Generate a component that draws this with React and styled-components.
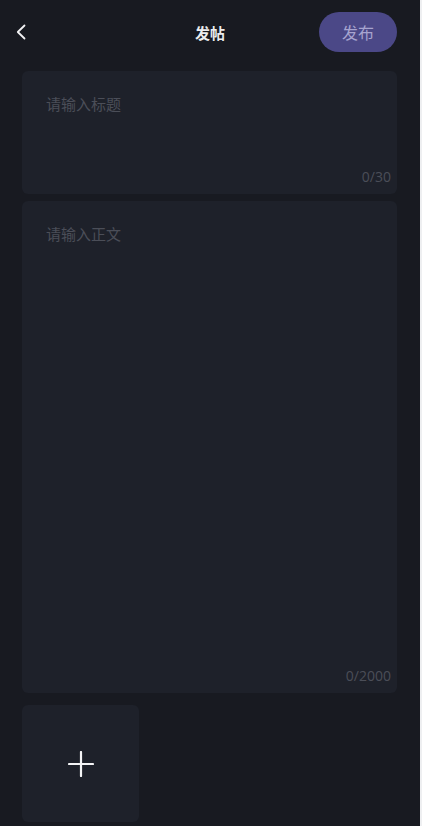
import React, { useState } from "react";
import styled, { createGlobalStyle } from "styled-components";

const GlobalStyle = createGlobalStyle`
  html, body {
    margin: 0;
    padding: 0;
    background: #eeeff1;
  }
  * {
    box-sizing: border-box;
  }
`;

const Page = styled.div`
  width: 420px;
  height: 826px;
  background: #181a21;
  font-family: "Noto Sans CJK SC", "Noto Sans", sans-serif;
  display: flex;
  flex-direction: column;
  overflow: hidden;
`;

const Header = styled.header`
  height: 65px;
  display: grid;
  grid-template-columns: 1fr auto 1fr;
  align-items: center;
  padding: 0 23px 1px 23px;
`;

const BackButton = styled.button`
  justify-self: start;
  margin-left: -7px;
  background: none;
  border: none;
  padding: 0;
  width: 20px;
  height: 24px;
  display: flex;
  align-items: center;
  cursor: pointer;
`;

const Title = styled.h1`
  margin: 0;
  color: #ececef;
  font-size: 15px;
  font-weight: 700;
`;

const PublishButton = styled.button`
  justify-self: end;
  width: 78px;
  height: 40px;
  border: none;
  border-radius: 20px;
  background: #4b4887;
  color: #a7a4cf;
  font-family: inherit;
  font-size: 16px;
  cursor: pointer;
`;

const Content = styled.main`
  flex: 1;
  display: flex;
  flex-direction: column;
  gap: 7px;
  padding: 6px 23px 0 22px;
`;

const Card = styled.div`
  position: relative;
  height: ${(p) => p.$height}px;
  background: #1e212a;
  border-radius: 6px;
  padding: 22px 24px;
`;

const Field = styled.textarea`
  width: 100%;
  height: 100%;
  background: transparent;
  border: none;
  outline: none;
  resize: none;
  padding: 0;
  color: #d8d9de;
  font-family: inherit;
  font-size: 15px;
  line-height: 22px;

  &::placeholder {
    color: #4b4e58;
  }
`;

const Counter = styled.span`
  position: absolute;
  right: 6px;
  bottom: 8px;
  color: #4b4e58;
  font-family: "Open Sans", "Noto Sans", sans-serif;
  font-size: 14px;
`;

const Media = styled.div`
  margin-top: 5px;
  display: flex;
`;

const AddTile = styled.button`
  width: 117px;
  height: 117px;
  border: none;
  border-radius: 6px;
  background: #1e212a;
  display: flex;
  align-items: center;
  justify-content: center;
  cursor: pointer;
`;

const App = () => {
  const [title, setTitle] = useState("");
  const [body, setBody] = useState("");

  return (
    <>
      <GlobalStyle />
      <Page>
        <Header>
          <BackButton aria-label="返回">
            <svg width="10" height="16" viewBox="0 0 10 16" fill="none">
              <path d="M8.5 1.5 L1.8 8 L8.5 14.5" stroke="#f2f2f4" strokeWidth="1.8" strokeLinecap="round" strokeLinejoin="round" />
            </svg>
          </BackButton>
          <Title>发帖</Title>
          <PublishButton>发布</PublishButton>
        </Header>

        <Content>
          <Card $height={123}>
            <Field
              value={title}
              maxLength={30}
              onChange={(e) => setTitle(e.target.value)}
              placeholder="请输入标题"
            />
            <Counter>{title.length}/30</Counter>
          </Card>

          <Card $height={492}>
            <Field
              value={body}
              maxLength={2000}
              onChange={(e) => setBody(e.target.value)}
              placeholder="请输入正文"
            />
            <Counter>{body.length}/2000</Counter>
          </Card>

          <Media>
            <AddTile aria-label="添加图片">
              <svg width="26" height="26" viewBox="0 0 26 26">
                <path d="M13 1 V25 M1 13 H25" stroke="#f4f4f6" strokeWidth="2.2" strokeLinecap="round" />
              </svg>
            </AddTile>
          </Media>
        </Content>
      </Page>
    </>
  );
};

export default App;
